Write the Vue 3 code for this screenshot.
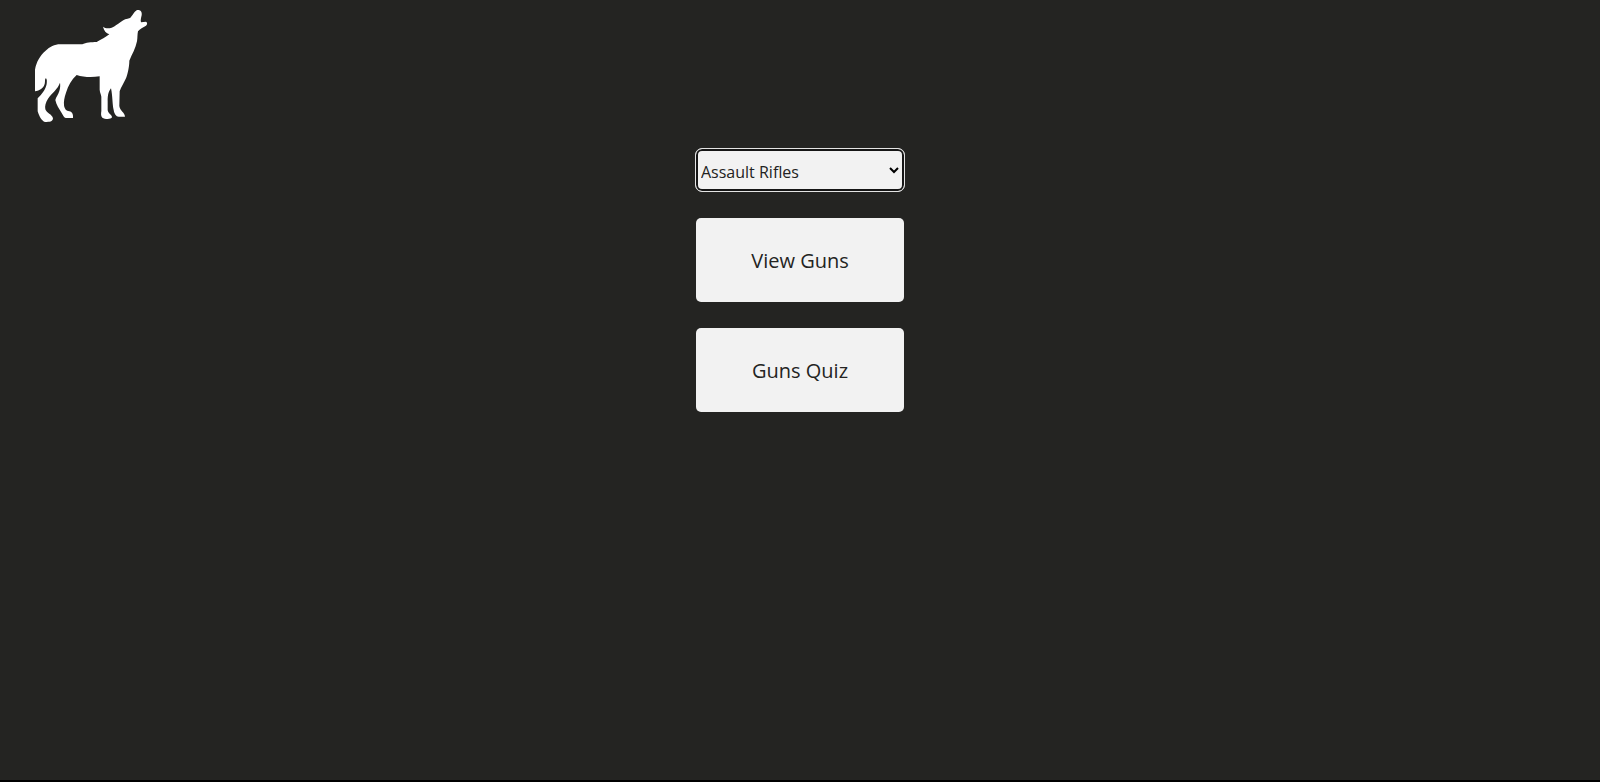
<script setup>
import { ref } from 'vue'

const category = ref('Assault Rifles')
const categories = ['Assault Rifles']
</script>

<template>
  <div class="page">
    <header class="header">
      <a href="#" class="logo" aria-label="Home">
        <svg viewBox="0 0 420 390" aria-hidden="true">
          <path
            d="M45 209 C49 186 60 167 76 153 C90 140 103 133 121 133 L187 133 C197 127 214 127 230 126 C244 119 257 111 268 103 C258 100 252 92 249 80 C257 86 265 86 275 83 C287 78 291 73 302 66 C311 58 320 57 330 54 C337 48 343 34 351 30 C361 28 367 35 365 46 C363 55 361 61 363 67 L378 65 C383 67 382 74 378 77 C370 82 359 86 354 94 C352 102 353 112 351 124 C347 145 336 163 328 182 C328 200 323 222 318 235 C313 247 303 261 299 274 L298 318 C300 333 315 338 315 350 L296 350 C288 350 283 342 281 330 C277 313 278 289 273 265 C264 276 263 290 263 303 L263 330 C264 341 276 343 276 352 C273 359 254 358 247 353 C242 348 243 340 244 333 L244 290 C243 282 240 279 239 269 L239 229 C215 233 191 232 170 225 C154 239 145 257 138 278 C133 292 131 305 132 316 C134 328 139 333 148 334 C157 336 160 344 159 354 L137 354 C130 352 130 346 125 339 C117 326 109 315 106 300 C108 290 115 285 118 273 C121 263 121 255 120 248 C113 268 97 277 84 296 C77 307 74 318 76 328 C80 339 96 343 99 355 C98 366 89 366 75 366 C65 363 58 350 53 334 L53 295 C65 283 77 269 80 252 C81 243 81 238 78 235 C74 235 76 244 74 252 C70 265 59 272 45 274 Z"
            fill="#fff"
          />
        </svg>
      </a>
    </header>
    <main class="menu">
      <select v-model="category" class="category" aria-label="Gun category">
        <option v-for="name in categories" :key="name">{{ name }}</option>
      </select>
      <button type="button" class="action">View Guns</button>
      <button type="button" class="action">Guns Quiz</button>
    </main>
  </div>
</template>

<style>
body {
  margin: 0;
  background: #242422;
}
</style>

<style scoped>
.page {
  box-sizing: border-box;
  min-height: 100vh;
  border-bottom: 2px solid #000;
  background: #242422;
  font-family: "Segoe UI", "Open Sans", "Noto Sans", sans-serif;
}

.header {
  display: flex;
  padding: 0 20px;
}

.logo,
.logo svg {
  display: block;
  width: 140px;
  height: 130px;
}

.menu {
  display: flex;
  flex-direction: column;
  align-items: center;
  gap: 26px;
  padding-top: 18px;
}

.category {
  appearance: none;
  box-sizing: border-box;
  width: 210px;
  height: 44px;
  padding: 3px 24px 0 5px;
  border: 1px solid #e4e4e4;
  border-radius: 7px;
  outline: none;
  box-shadow: inset 0 0 0 2px #161616;
  background: #f2f2f2
    url("data:image/svg+xml,%3Csvg xmlns='http://www.w3.org/2000/svg' width='10' height='7' viewBox='0 0 10 7'%3E%3Cpath d='M1 1l4 4 4-4' fill='none' stroke='%23000' stroke-width='2'/%3E%3C/svg%3E")
    no-repeat right 5px center;
  color: #222;
  font: inherit;
  font-size: 16px;
}

.action {
  width: 208px;
  height: 84px;
  padding: 0 8px;
  border: 0;
  border-radius: 5px;
  background: #f2f2f2;
  color: #242422;
  font: inherit;
  font-size: 20px;
  cursor: pointer;
}
</style>
